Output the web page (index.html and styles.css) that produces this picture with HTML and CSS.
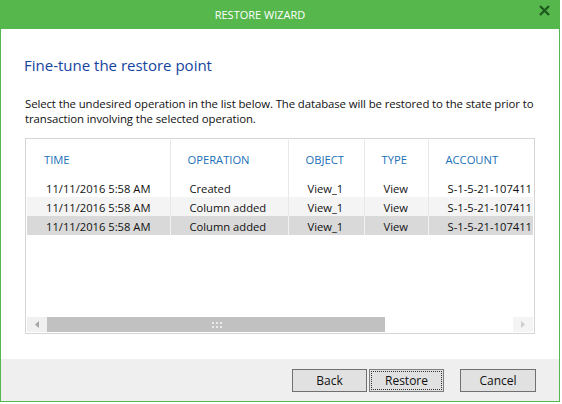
FILE: index.html
```html
<!DOCTYPE html>
<html lang="en">
<head>
    <meta charset="UTF-8">
    <title>Restore Wizard</title>
    <link rel="stylesheet" href="styles.css">
</head>
<body>
    <div class="window">
        <div class="titlebar">
            <span class="title">RESTORE WIZARD</span>
            <span class="close">
                <svg width="11" height="11" viewBox="0 0 11 11"><path d="M1 1 L10 10 M10 1 L1 10" stroke="#1d5b1f" stroke-width="2.4" fill="none"/></svg>
            </span>
        </div>

        <div class="content">
            <h1>Fine-tune the restore point</h1>
            <p class="hint">Select the undesired operation in the list below. The database will be restored to the state prior to transaction involving the selected operation.</p>

            <div class="list">
                <table class="ops">
                    <colgroup>
                        <col class="c-time"><col class="c-op"><col class="c-obj"><col class="c-type"><col class="c-acc">
                    </colgroup>
                    <thead>
                        <tr>
                            <th>TIME</th><th>OPERATION</th><th>OBJECT</th><th>TYPE</th><th>ACCOUNT</th>
                        </tr>
                    </thead>
                    <tbody>
                        <tr>
                            <td>11/11/2016 5:58 AM</td><td>Created</td><td>View_1</td><td>View</td><td>S-1-5-21-107411</td>
                        </tr>
                        <tr class="alt">
                            <td>11/11/2016 5:58 AM</td><td>Column added</td><td>View_1</td><td>View</td><td>S-1-5-21-107411</td>
                        </tr>
                        <tr class="selected">
                            <td>11/11/2016 5:58 AM</td><td>Column added</td><td>View_1</td><td>View</td><td>S-1-5-21-107411</td>
                        </tr>
                    </tbody>
                </table>

                <div class="hscroll">
                    <div class="sb-btn">
                        <svg width="4" height="7" viewBox="0 0 4 7"><path d="M4 0 L0 3.5 L4 7 Z" fill="#a6a6a6"/></svg>
                    </div>
                    <div class="sb-thumb">
                        <svg width="10" height="6" viewBox="0 0 10 6" fill="#eaeaea">
                            <rect x="0" y="0" width="2" height="2"/><rect x="4" y="0" width="2" height="2"/><rect x="8" y="0" width="2" height="2"/>
                            <rect x="0" y="4" width="2" height="2"/><rect x="4" y="4" width="2" height="2"/><rect x="8" y="4" width="2" height="2"/>
                        </svg>
                    </div>
                    <div class="sb-track"></div>
                    <div class="sb-btn sb-right">
                        <svg width="4" height="7" viewBox="0 0 4 7"><path d="M0 0 L4 3.5 L0 7 Z" fill="#cdcdcd"/></svg>
                    </div>
                </div>
            </div>
        </div>

        <div class="footer">
            <button class="btn">Back</button>
            <button class="btn focused">Restore</button>
            <button class="btn cancel">Cancel</button>
        </div>
    </div>
</body>
</html>
```

FILE: styles.css
```css
:root {
    --green: #56b84c;
    --heading: #1544a0;
    --column: #2170b8;
    --line: #d5d5d5;
}

body {
    margin: 0;
    background: #fff;
    font-family: 'Open Sans', 'Liberation Sans', sans-serif;
    font-size: 12px;
    color: #111;
}

.window {
    width: 560px;
    height: 402px;
    box-sizing: border-box;
    border: 1px solid var(--green);
    border-top: none;
    display: flex;
    flex-direction: column;
}

.titlebar {
    position: relative;
    height: 29px;
    margin: 0 -1px;
    background: var(--green);
    color: #fff;
    display: flex;
    align-items: center;
    justify-content: center;
    padding-right: 40px;
    box-sizing: border-box;
    font-size: 11px;
}

.close {
    position: absolute;
    right: 10px;
    top: 5px;
    line-height: 0;
}

.content {
    flex: 1;
    padding: 0 23px 0 24px;
}

h1 {
    margin: 26px 0 0 -1px;
    font-size: 15px;
    font-weight: normal;
    line-height: 20px;
    color: var(--heading);
}

.hint {
    margin: 21px 0 0;
    line-height: 15px;
    font-size: 11.4px;
    letter-spacing: -0.1px;
}

.list {
    margin-top: 12px;
    width: 510px;
    height: 196px;
    box-sizing: border-box;
    border: 1px solid var(--line);
    padding: 1px 1px 0;
    display: flex;
    flex-direction: column;
    justify-content: space-between;
}

.ops {
    width: 506px;
    table-layout: fixed;
    border-collapse: collapse;
}

.c-time { width: 143px; }
.c-op { width: 118px; }
.c-obj { width: 76px; }
.c-type { width: 64px; }
.c-acc { width: 105px; }

.ops th,
.ops td {
    text-align: left;
    white-space: nowrap;
    overflow: hidden;
    border-right: 1px solid #e8e8e8;
    padding: 0;
}

.ops th:last-child,
.ops td:last-child {
    border-right: none;
}

.ops th {
    height: 38px;
    padding-left: 17px;
    padding-top: 1px;
    box-sizing: border-box;
    font-weight: normal;
    color: var(--column);
    font-size: 11.2px;
}

.ops td {
    height: 19px;
    padding-left: 19px;
    padding-top: 1px;
    box-sizing: border-box;
    font-size: 11.2px;
}

.ops tr.alt td {
    background: #f4f4f4;
}

.ops tr.selected td {
    background: #d9d9d9;
    border-right-color: #f2f2f2;
}

.hscroll {
    display: flex;
    height: 15px;
    margin-bottom: 1px;
}

.sb-btn {
    width: 20px;
    background: #f0f0f0;
    display: flex;
    align-items: center;
    justify-content: center;
}

.sb-right {
    background: #f4f4f4;
}

.sb-thumb {
    width: 338px;
    background: #c1c1c1;
    display: flex;
    align-items: center;
    justify-content: center;
    padding-left: 2px;
    box-sizing: border-box;
}

.sb-track {
    flex: 1;
    background: #fff;
}

.footer {
    height: 42px;
    background: #efefef;
    display: flex;
    justify-content: flex-end;
    align-items: flex-start;
    padding: 10px 23px 0 0;
    box-sizing: border-box;
}

.btn {
    width: 75px;
    height: 23px;
    margin-left: 2px;
    background: #e1e1e1;
    border: 1px solid #707070;
    font-family: inherit;
    font-size: 12px;
    color: #111;
    padding: 0;
}

.btn.focused {
    border-color: #7d7d7d;
    outline: 1px dotted #333;
    outline-offset: -3px;
}

.btn.cancel {
    width: 76px;
    margin-left: 16px;
}
```
